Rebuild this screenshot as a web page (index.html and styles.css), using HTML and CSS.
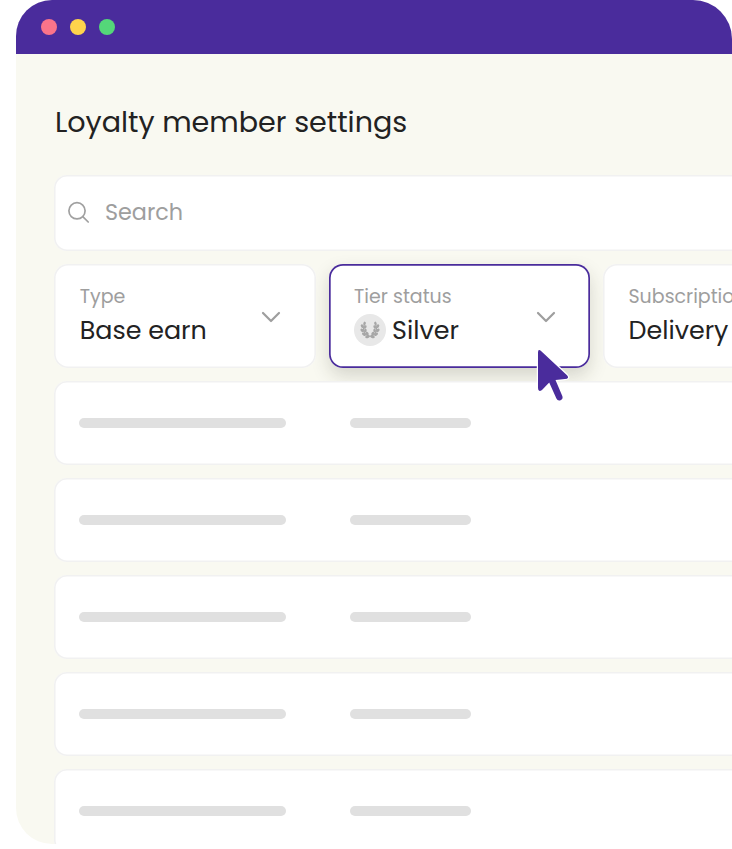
FILE: index.html
```html
<!DOCTYPE html>
<html lang="en">
<head>
  <meta charset="UTF-8" />
  <title>Loyalty member settings</title>
  <meta name="viewport" content="width=device-width, initial-scale=1.0" />
  <link rel="stylesheet" href="styles.css">
</head>
<body>

  <div class="window">
    <header class="titlebar">
      <span class="dot red"></span>
      <span class="dot yellow"></span>
      <span class="dot green"></span>
    </header>

    <main class="content">
      <h1>Loyalty member settings</h1>

      <div class="search">
        <svg class="search-icon" width="24" height="24" viewBox="0 0 24 24">
          <circle cx="10" cy="10.8" r="8.1"/>
          <path d="M15.8 16.6l5.4 5.4"/>
        </svg>
        <span class="search-text">Search</span>
      </div>

      <div class="filters">
        <div class="filter">
          <div>
            <div class="label">Type</div>
            <div class="value">Base earn</div>
          </div>
          <svg class="chevron" width="20" height="12" viewBox="0 0 20 12"><path d="M2 2l8 8 8-8"/></svg>
        </div>

        <div class="filter active">
          <div>
            <div class="label">Tier status</div>
            <div class="value">
              <span class="badge">
                <!-- laurel wreath -->
                <svg width="20" height="20" viewBox="0 0 20 20">
                  <path class="stem" d="M4.2 4.5Q1.6 14.6 10 16.4Q18.4 14.6 15.8 4.5"/>
                  <g id="branch">
                    <ellipse cx="4.6" cy="3.4" rx="1.2" ry="1.8" transform="rotate(10 4.6 3.4)"/>
                    <ellipse cx="2.2" cy="6.2" rx="1.3" ry="1.9" transform="rotate(-30 2.2 6.2)"/>
                    <ellipse cx="5.2" cy="7" rx="1.3" ry="1.9" transform="rotate(25 5.2 7)"/>
                    <ellipse cx="2.2" cy="10.3" rx="1.4" ry="2" transform="rotate(-40 2.2 10.3)"/>
                    <ellipse cx="5.4" cy="10.6" rx="1.3" ry="1.9" transform="rotate(5 5.4 10.6)"/>
                    <ellipse cx="4" cy="14.2" rx="1.4" ry="2.2" transform="rotate(-60 4 14.2)"/>
                    <ellipse cx="7.2" cy="13.6" rx="1.3" ry="1.9" transform="rotate(-35 7.2 13.6)"/>
                    <ellipse cx="7.4" cy="16.9" rx="1.3" ry="2.2" transform="rotate(80 7.4 16.9)"/>
                  </g>
                  <use href="#branch" transform="translate(20 0) scale(-1 1)"/>
                </svg>
              </span>
              Silver
            </div>
          </div>
          <svg class="chevron" width="20" height="12" viewBox="0 0 20 12"><path d="M2 2l8 8 8-8"/></svg>
          <svg class="cursor" width="36" height="58" viewBox="0 0 36 58">
            <path d="M4 5.5Q4 1.5 7.3 4.2L33 28.2Q36 31.5 31 32L21.5 33L28.4 49.2Q29.2 52 26.6 53.2Q23.7 54.3 22.4 51.6L15.2 35.5L8 43Q4 45.5 4 41Z"/>
          </svg>
        </div>

        <div class="filter">
          <div>
            <div class="label">Subscription</div>
            <div class="value">Delivery</div>
          </div>
        </div>
      </div>

      <div class="rows">
        <div class="row"><span class="bar long"></span><span class="bar"></span></div>
        <div class="row"><span class="bar long"></span><span class="bar"></span></div>
        <div class="row"><span class="bar long"></span><span class="bar"></span></div>
        <div class="row"><span class="bar long"></span><span class="bar"></span></div>
        <div class="row"><span class="bar long"></span><span class="bar"></span></div>
      </div>
    </main>
  </div>

</body>
</html>
```
FILE: styles.css
```css
* {
  box-sizing: border-box;
}

body {
  margin: 0;
  background: #fff;
  font-family: Poppins, Inter, sans-serif;
  color: #222;
  overflow: hidden;
}

.window {
  width: 715.6px;
  height: 844px;
  margin-left: 16px;
  border-radius: 36px 39px 0 36px;
  background: #f9f9f1;
  overflow: hidden;
}

.titlebar {
  display: flex;
  align-items: center;
  gap: 12.5px;
  height: 54px;
  padding-left: 25.2px;
  background: #4a2c9c;
}

.dot {
  width: 16.2px;
  height: 16.2px;
  border-radius: 50%;
}

.red {
  background: #fa748a;
}

.yellow {
  background: #ffd34c;
}

.green {
  background: #54d779;
}

.content {
  padding: 48px 0 0 38.4px;
}

h1 {
  margin: 0;
  height: 73px;
  padding-left: 0.5px;
  font-size: 28.6px;
  font-weight: 400;
  line-height: 40px;
  white-space: nowrap;
}

.search {
  display: flex;
  align-items: center;
  width: 720px;
  height: 76px;
  padding: 0 0 2px 13px;
  border-radius: 13px;
  background: #fff;
  box-shadow: inset 0 0 0 1.6px #f1f1f1;
}

.search-icon {
  fill: none;
  stroke: #a0a0a0;
  stroke-width: 1.7;
  stroke-linecap: round;
}

.search-text {
  margin-left: 13.5px;
  color: #9e9e9e;
  font-size: 22.3px;
}

.filters {
  display: flex;
  gap: 13px;
  margin-top: 13px;
}

.filter {
  position: relative;
  z-index: 1;
  display: flex;
  flex: none;
  justify-content: space-between;
  width: 261.4px;
  height: 104px;
  padding: 18px 34.5px 0 25.3px;
  border-radius: 14px;
  background: #fff;
  box-shadow: inset 0 0 0 1.6px #f1f1f1;
}

.filter.active {
  z-index: auto;
  box-shadow: inset 0 0 0 1.7px #4a2c9c, 0 8px 18px rgba(40, 40, 25, 0.17);
}

.label {
  height: 30px;
  color: #9e9e9e;
  font-size: 19px;
  line-height: 30px;
  white-space: nowrap;
}

.value {
  display: flex;
  align-items: center;
  height: 36px;
  font-size: 25.4px;
  white-space: nowrap;
}

.badge {
  display: flex;
  align-items: center;
  justify-content: center;
  width: 32px;
  height: 32px;
  margin-right: 6px;
  border-radius: 50%;
  background: #e8e8e8;
  fill: #a7a7a7;
}

.stem {
  fill: none;
  stroke: #a7a7a7;
  stroke-width: 1.2;
}

.chevron {
  margin-top: 29px;
  fill: none;
  stroke: #9e9e9e;
  stroke-width: 2.2;
  stroke-linecap: round;
  stroke-linejoin: round;
}

.cursor {
  position: absolute;
  top: 83px;
  left: 205.4px;
  z-index: 3;
  fill: #4a2c9c;
  stroke: #fff;
  stroke-width: 2.4;
  paint-order: stroke;
}

.rows {
  display: flex;
  flex-direction: column;
  gap: 13px;
  margin-top: 12.5px;
}

.row {
  position: relative;
  z-index: 1;
  display: flex;
  align-items: center;
  gap: 63.5px;
  width: 720px;
  height: 84px;
  padding-left: 25px;
  border-radius: 13px;
  background: #fff;
  box-shadow: inset 0 0 0 1.6px #f1f1f1;
}

.bar {
  width: 121px;
  height: 10px;
  border-radius: 5px;
  background: #e0e0e0;
}

.bar.long {
  width: 207px;
}
```
